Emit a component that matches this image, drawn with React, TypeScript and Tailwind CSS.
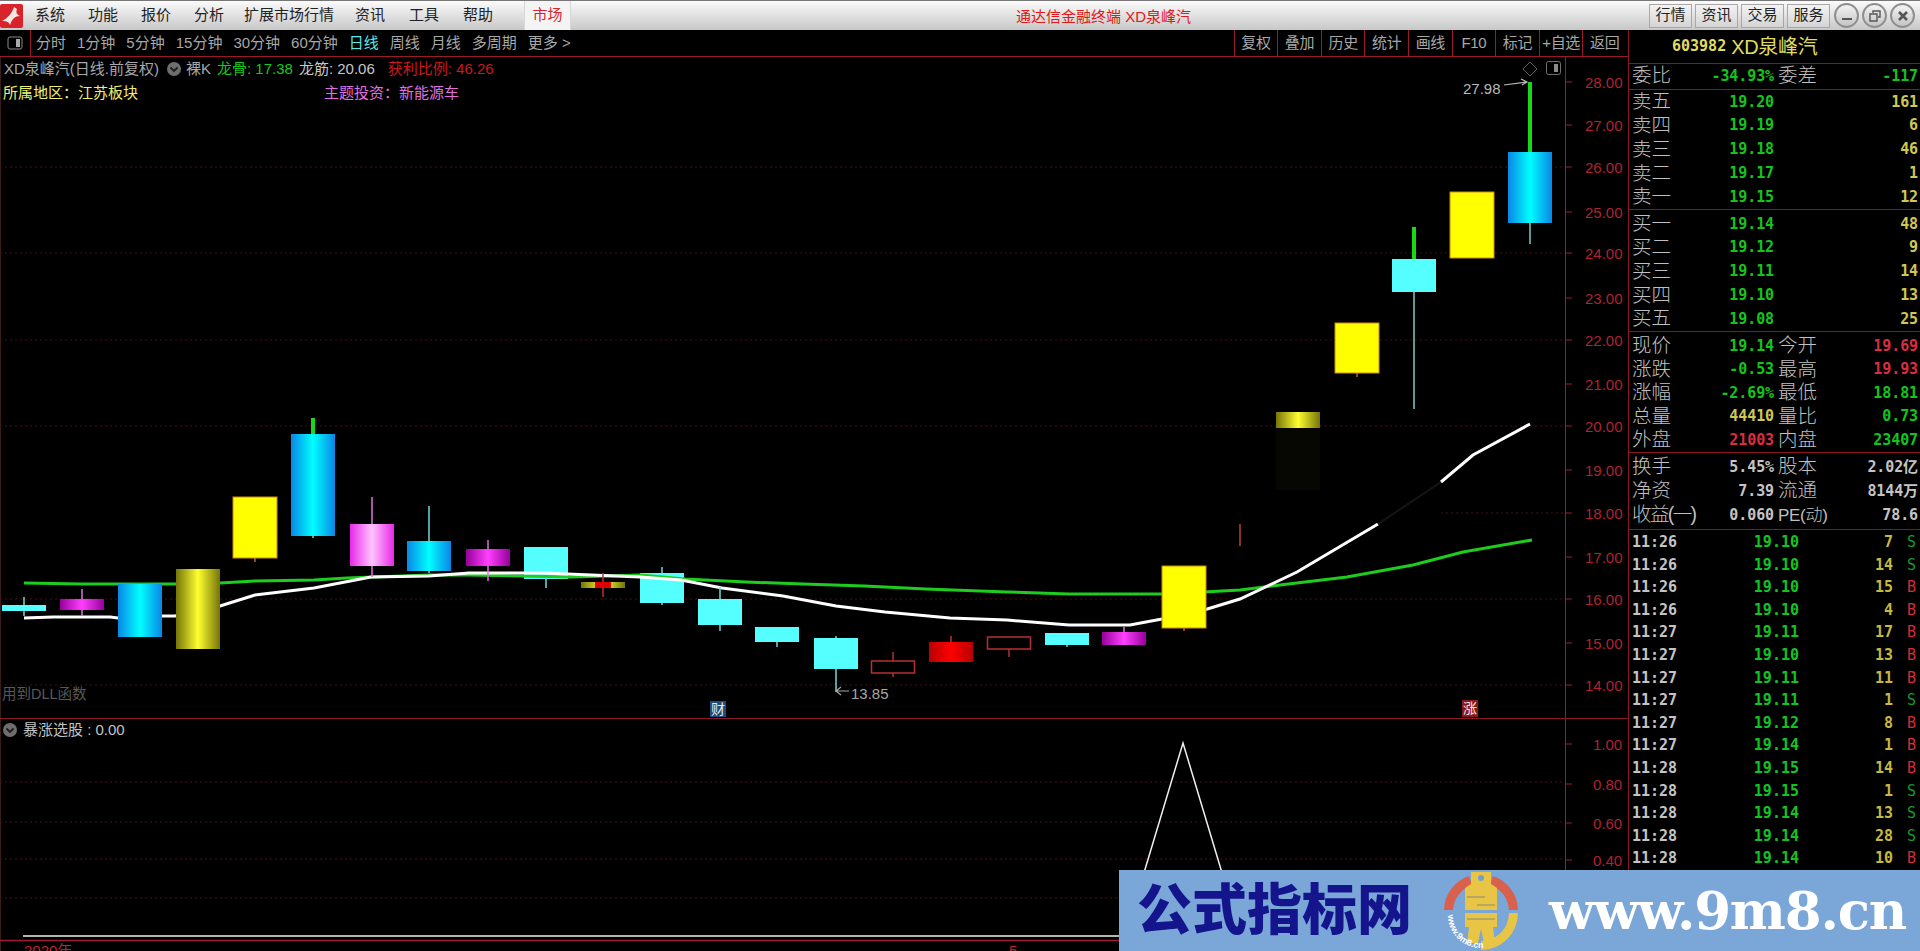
import React from "react";

type Candle = {
  x: number;
  top: number;
  bot: number;
  hi?: number;
  lo?: number;
  fill: string;
  wick: string;
  hiWick?: string;
  hollow?: boolean;
};

const CYAN = "#55ffff";
const YELLOW = "#ffff00";

const underLines: Candle[] = [
  { x: 524, top: 547, bot: 579, lo: 588, fill: CYAN, wick: "#70d8d8" },
  { x: 640, top: 573, bot: 603, hi: 567, lo: 605, fill: CYAN, wick: "#70d8d8" },
];

const candles: Candle[] = [
  { x: 2, top: 605, bot: 611, hi: 597, lo: 616, fill: CYAN, wick: "#70d8d8" },
  { x: 60, top: 599, bot: 610, hi: 589, lo: 616, fill: "url(#gMag)", wick: "#e070e0" },
  { x: 118, top: 584, bot: 637, fill: "url(#gBlue)", wick: "#70d8d8" },
  { x: 176, top: 569, bot: 649, fill: "url(#gOlive)", wick: "#c8c040" },
  { x: 233, top: 497, bot: 558, lo: 562, fill: YELLOW, wick: "#c06020" },
  { x: 291, top: 434, bot: 536, hi: 418, lo: 538, fill: "url(#gBlue)", wick: "#70d8d8", hiWick: "#18d818" },
  { x: 350, top: 524, bot: 566, hi: 497, lo: 577, fill: "url(#gPink)", wick: "#e070e0" },
  { x: 407, top: 541, bot: 571, hi: 506, lo: 573, fill: "url(#gBlue)", wick: "#70d8d8" },
  { x: 466, top: 549, bot: 566, hi: 540, lo: 581, fill: "url(#gMag)", wick: "#e070e0" },
  { x: 581, top: 582, bot: 588, hi: 573, lo: 597, fill: "url(#gOlive)", wick: "#c03030" },
  { x: 698, top: 599, bot: 625, hi: 587, lo: 631, fill: CYAN, wick: "#70d8d8" },
  { x: 755, top: 627, bot: 642, lo: 647, fill: CYAN, wick: "#70d8d8" },
  { x: 814, top: 638, bot: 669, hi: 636, lo: 692, fill: CYAN, wick: "#70d8d8" },
  { x: 871, top: 661, bot: 673, hi: 652, lo: 677, fill: "none", wick: "#b03030", hollow: true },
  { x: 929, top: 642, bot: 662, hi: 636, fill: "url(#gRed)", wick: "#c03030" },
  { x: 987, top: 637, bot: 649, lo: 657, fill: "none", wick: "#b03030", hollow: true },
  { x: 1045, top: 633, bot: 645, lo: 647, fill: CYAN, wick: "#70d8d8" },
  { x: 1102, top: 632, bot: 645, hi: 627, fill: "url(#gMag)", wick: "#e070e0" },
  { x: 1162, top: 566, bot: 628, lo: 631, fill: YELLOW, wick: "#c06020" },
  { x: 1276, top: 412, bot: 428, fill: "url(#gOlive)", wick: "#c8c040" },
  { x: 1335, top: 323, bot: 373, lo: 377, fill: YELLOW, wick: "#c06020" },
  { x: 1392, top: 259, bot: 292, hi: 227, lo: 409, fill: CYAN, wick: "#80c8c8", hiWick: "#18d818" },
  { x: 1450, top: 192, bot: 258, fill: YELLOW, wick: "#c06020" },
  { x: 1508, top: 152, bot: 223, hi: 82, lo: 244, fill: "url(#gBlue)", wick: "#80c8c8", hiWick: "#18d818" },
];

const greenLine =
  "24,583 82,584 175,584 220,583 255,581 314,580 347,578 429,575 469,575 571,577 640,575 685,579 746,582 803,584 864,586 926,589 1007,592 1069,594 1162,594 1204,592 1240,590 1280,585 1347,577 1413,565 1463,552 1532,540";
const whiteLineA =
  "24,618 53,617 110,617 118,618 163,616 175,616 220,606 255,595 314,588 371,577 429,576 469,573 543,573 640,577 681,580 722,588 783,596 836,606 885,612 950,618 1007,620 1069,625 1130,625 1162,619 1204,610 1240,599 1297,572 1378,524";
const whiteLineB = "1441,482 1473,455 1530,424";

const priceAxis = [
  ["28.00", 82],
  ["27.00", 125],
  ["26.00", 167],
  ["25.00", 212],
  ["24.00", 253],
  ["23.00", 298],
  ["22.00", 340],
  ["21.00", 384],
  ["20.00", 426],
  ["19.00", 470],
  ["18.00", 513],
  ["17.00", 557],
  ["16.00", 599],
  ["15.00", 643],
  ["14.00", 685],
] as const;

const gridDots = [
  [0, 167],
  [0, 253],
  [0, 340],
  [0, 426],
  [1441, 513],
  [0, 599],
  [0, 685],
] as const;

const CandleShape = ({ c }: { c: Candle }) => {
  const w = 44;
  const mid = c.x + w / 2;
  return (
    <g>
      {c.hi !== undefined && (
        <line
          x1={mid}
          x2={mid}
          y1={c.hi}
          y2={c.top}
          stroke={c.hiWick ?? c.wick}
          strokeWidth={c.hiWick ? 4 : 1.5}
        />
      )}
      {c.lo !== undefined && (
        <line x1={mid} x2={mid} y1={c.bot} y2={c.lo} stroke={c.wick} strokeWidth={1.5} />
      )}
      <rect
        x={c.hollow ? c.x + 0.5 : c.x}
        y={c.top}
        width={c.hollow ? w - 1 : w}
        height={c.bot - c.top}
        fill={c.fill}
        stroke={c.hollow ? "#b83030" : c.fill === YELLOW ? "#d08a10" : "none"}
        strokeWidth={c.hollow ? 1.5 : 1}
      />
    </g>
  );
};

const Grad = ({ id, edge, mid }: { id: string; edge: string; mid: string }) => (
  <linearGradient id={id} x1="0" x2="1" y1="0" y2="0">
    <stop offset="0" stopColor={edge} />
    <stop offset="0.5" stopColor={mid} />
    <stop offset="1" stopColor={edge} />
  </linearGradient>
);

const Fold = () => (
  <svg width="14" height="14" viewBox="0 0 14 14" className="shrink-0">
    <circle cx="7" cy="7" r="7" fill="#6e6e6e" />
    <path d="M3.5 5.5 7 9l3.5-3.5" fill="none" stroke="#1c1c1c" strokeWidth="1.8" />
  </svg>
);

const UpperChart = () => (
  <svg viewBox="0 57 1629 661" className="block h-[661px] w-[1629px]">
    <defs>
      <Grad id="gBlue" edge="#0a86e6" mid="#00ffff" />
      <Grad id="gMag" edge="#96009c" mid="#ff40ff" />
      <Grad id="gPink" edge="#e828e8" mid="#ffc4ff" />
      <Grad id="gOlive" edge="#74740a" mid="#ffff30" />
      <Grad id="gRed" edge="#b80000" mid="#ff0000" />
    </defs>
    <line x1="0.5" x2="0.5" y1="57" y2="718" stroke="#3a1c1c" />
    {gridDots.map(([x, y]) => (
      <line
        key={y}
        x1={x}
        x2="1565"
        y1={y}
        y2={y}
        stroke="#4a0f12"
        strokeWidth="1"
        strokeDasharray="2 3"
      />
    ))}
    {priceAxis.map(([label, y]) => (
      <g key={label}>
        <line x1="1565" x2="1572" y1={y} y2={y} stroke="#a01a24" />
        <text x="1585" y={y + 6} fontSize="15" fill="#b02232" fontFamily="Liberation Sans">
          {label}
        </text>
      </g>
    ))}
    <line x1="1565.5" x2="1565.5" y1="57" y2="718" stroke="#a01a24" />
    {underLines.map((c) => (
      <CandleShape key={c.x} c={c} />
    ))}
    <polyline points={greenLine} fill="none" stroke="#1ecc1e" strokeWidth="3" />
    <polyline points={whiteLineA} fill="none" stroke="#ffffff" strokeWidth="3" />
    <line x1="1378" y1="524" x2="1441" y2="482" stroke="#141414" strokeWidth="2" />
    <polyline points={whiteLineB} fill="none" stroke="#ffffff" strokeWidth="3" />
    {candles.map((c) => (
      <CandleShape key={c.x} c={c} />
    ))}
    <rect x="595" y="582" width="16" height="6" fill="#e00000" />
    <rect x="1276" y="428" width="44" height="62" fill="#060603" />
    <line x1="1240" x2="1240" y1="524" y2="546" stroke="#c04030" strokeWidth="1.5" />

    {/* high and low markers */}
    <text x="1463" y="94" fontSize="15" fill="#b8b8b8" fontFamily="Liberation Sans">
      27.98
    </text>
    <path d="M1504 85 1527 82M1521 79l6 3-5 3" fill="none" stroke="#b8b8b8" strokeWidth="1.2" />
    <text x="851" y="699" fontSize="15" fill="#a8a8a8" fontFamily="Liberation Sans">
      13.85
    </text>
    <path d="M849 691H836M841 687l-5 4 5 4" fill="none" stroke="#a8a8a8" strokeWidth="1.2" />
    <path d="M1530 62l7 7-7 7-7-7z" fill="none" stroke="#5e5e5e" />
    <rect x="1546.5" y="61.5" width="14" height="13" rx="2" fill="none" stroke="#707070" />
    <rect x="1554" y="64" width="4" height="8" fill="#8a8a8a" />
  </svg>
);

const LowerChart = () => (
  <svg viewBox="0 719 1629 232" className="block h-[232px] w-[1629px]">
    <line x1="0.5" x2="0.5" y1="719" y2="951" stroke="#3a1c1c" />
    {[782, 822, 859, 898].map((y) => (
      <line key={y} x1="0" x2="1565" y1={y} y2={y} stroke="#4a1014" strokeDasharray="2 3" />
    ))}
    {[
      ["1.00", 744],
      ["0.80", 784],
      ["0.60", 823],
      ["0.40", 860],
    ].map(([label, y]) => (
      <g key={label}>
        <line x1="1565" x2="1572" y1={y} y2={y} stroke="#a01a24" />
        <text x="1593" y={Number(y) + 6} fontSize="15" fill="#b02232" fontFamily="Liberation Sans">
          {label}
        </text>
      </g>
    ))}
    <line x1="1565.5" x2="1565.5" y1="719" y2="951" stroke="#a01a24" />
    <polyline
      points="23,936 1125,936 1183,743 1241,936 1565,936"
      fill="none"
      stroke="#f0f0f0"
      strokeWidth="1.5"
    />
    <line x1="0" x2="1629" y1="940.5" y2="940.5" stroke="#a01a30" strokeWidth="1.5" />
    <text x="24" y="956" fontSize="15" fill="#c02030" fontFamily="Liberation Sans, Noto Sans CJK SC">
      2020年
    </text>
    <text x="1009" y="956" fontSize="15" fill="#c02030" fontFamily="Liberation Sans">
      5
    </text>
  </svg>
);

const Row = ({
  l1,
  v1,
  c1,
  l2,
  v2,
  c2,
  l1Cls = "text-[19.5px]",
  l2Cls = "text-[19.5px]",
}: {
  l1: string;
  v1: string;
  c1: string;
  l2?: string;
  v2?: string;
  c2?: string;
  l1Cls?: string;
  l2Cls?: string;
}) => (
  <div className="flex h-[24px] items-center">
    <div className="flex w-[145px] items-center justify-between pl-[3px]">
      <span className={`${l1Cls} font-light text-[#c0c0c0] leading-none`}>{l1}</span>
      <span className={`font-[family-name:'DejaVu_Sans_Mono','Noto_Sans_CJK_SC',monospace] text-[15px] font-bold tracking-[-0.1px] ${c1}`}>
        {v1}
      </span>
    </div>
    {l2 && (
      <div className="flex flex-1 items-center justify-between pl-[4px] pr-[2px]">
        <span className={`${l2Cls} font-light text-[#c0c0c0] leading-none`}>{l2}</span>
        <span className={`font-[family-name:'DejaVu_Sans_Mono','Noto_Sans_CJK_SC',monospace] text-[15px] font-bold tracking-[-0.1px] ${c2}`}>
          {v2}
        </span>
      </div>
    )}
  </div>
);

const Rule = () => <div className="h-[1px] shrink-0 bg-[#8c1420]" />;

const GREEN = "text-[#14c41c]";
const GOLD = "text-[#d0c850]";
const RED = "text-[#dc2c40]";
const GREY = "text-[#c4c4c4]";

const sells = [
  ["卖五", "19.20", "161"],
  ["卖四", "19.19", "6"],
  ["卖三", "19.18", "46"],
  ["卖二", "19.17", "1"],
  ["卖一", "19.15", "12"],
];
const buys = [
  ["买一", "19.14", "48"],
  ["买二", "19.12", "9"],
  ["买三", "19.11", "14"],
  ["买四", "19.10", "13"],
  ["买五", "19.08", "25"],
];

const trades = [
  ["11:26", "19.10", "7", "S"],
  ["11:26", "19.10", "14", "S"],
  ["11:26", "19.10", "15", "B"],
  ["11:26", "19.10", "4", "B"],
  ["11:27", "19.11", "17", "B"],
  ["11:27", "19.10", "13", "B"],
  ["11:27", "19.11", "11", "B"],
  ["11:27", "19.11", "1", "S"],
  ["11:27", "19.12", "8", "B"],
  ["11:27", "19.14", "1", "B"],
  ["11:28", "19.15", "14", "B"],
  ["11:28", "19.15", "1", "S"],
  ["11:28", "19.14", "13", "S"],
  ["11:28", "19.14", "28", "S"],
  ["11:28", "19.14", "10", "B"],
];

const QuotePanel = () => (
  <div className="-ml-[1px] flex w-[292px] flex-col border-l border-[#8c1420]">
    <div className="flex h-[33px] items-center pl-[43px] text-[#e0dc60]">
      <span className="font-[family-name:'DejaVu_Sans_Mono',monospace] text-[15px] font-bold">603982</span>
      <span className="ml-[5px] text-[20px] tracking-[-0.3px]">XD泉峰汽</span>
    </div>
    <Rule />
    <div className="h-[25px]">
      <Row l1="委比" v1="-34.93%" c1={GREEN} l2="委差" v2="-117" c2={GREEN} />
    </div>
    <Rule />
    <div className="flex h-[119px] flex-col">
      {sells.map(([n, p, v]) => (
        <Row key={n} l1={n} v1={p} c1={GREEN} l2=" " v2={v} c2={GOLD} />
      ))}
    </div>
    <Rule />
    <div className="flex h-[121px] flex-col pt-[2px]">
      {buys.map(([n, p, v]) => (
        <Row key={n} l1={n} v1={p} c1={GREEN} l2=" " v2={v} c2={GOLD} />
      ))}
    </div>
    <Rule />
    <div className="flex h-[120px] flex-col pt-[2px]">
      <Row l1="现价" v1="19.14" c1={GREEN} l2="今开" v2="19.69" c2={RED} />
      <Row l1="涨跌" v1="-0.53" c1={GREEN} l2="最高" v2="19.93" c2={RED} />
      <Row l1="涨幅" v1="-2.69%" c1={GREEN} l2="最低" v2="18.81" c2={GREEN} />
      <Row l1="总量" v1="44410" c1={GOLD} l2="量比" v2="0.73" c2={GREEN} />
      <Row l1="外盘" v1="21003" c1={RED} l2="内盘" v2="23407" c2={GREEN} />
    </div>
    <Rule />
    <div className="flex h-[76px] flex-col pt-[2px]">
      <Row l1="换手" v1="5.45%" c1={GREY} l2="股本" v2="2.02亿" c2={GREY} />
      <Row l1="净资" v1="7.39" c1={GREY} l2="流通" v2="8144万" c2={GREY} />
      <Row
        l1="收益(一)"
        l1Cls="text-[19.5px] tracking-[-1.6px]"
        v1="0.060"
        c1={GREY}
        l2="PE(动)"
        l2Cls="text-[17px] tracking-[-0.3px]"
        v2="78.6"
        c2={GREY}
      />
    </div>
    <Rule />
    <div className="flex flex-col pt-[1px] font-[family-name:'DejaVu_Sans_Mono',monospace] text-[15px] font-bold">
      {trades.map(([t, p, v, s], i) => (
        <div key={i} className="grid h-[22.6px] grid-cols-[52px_115px_94px_30px] items-center pl-[3px]">
          <span className="text-[#c4c4c4]">{t}</span>
          <span className="-ml-[3px] text-right text-[#12c422]">{p}</span>
          <span className="-ml-[3px] text-right text-[#c8b840]">{v}</span>
          <span className={`pl-[14px] font-normal ${s === "S" ? "text-[#179a2a]" : "text-[#d62c38]"}`}>{s}</span>
        </div>
      ))}
    </div>
  </div>
);

const MENUS = ["系统", "功能", "报价", "分析"];
const MENUS2 = ["资讯", "工具", "帮助"];

const WinDot = ({ children }: { children: React.ReactNode }) => (
  <div className="flex h-[25px] w-[25px] items-center justify-center rounded-full border-2 border-[#8f8f8f] bg-gradient-to-b from-[#f4f4f4] to-[#c4c4c4]">
    {children}
  </div>
);

const TitleBar = () => (
  <div className="relative flex h-[30px] shrink-0 items-center border-t border-[#777] bg-gradient-to-b from-[#fbfbfb] to-[#c8c8c8] text-[15px] text-[#222]">
    <svg width="23" height="24" viewBox="0 0 23 24" className="shrink-0">
      <rect width="23" height="24" rx="2" fill="#d8232a" />
      <path d="M2 17C8 14 12 9 14 3l3 2c-1 3-1 5 3 7-5 0-8 3-10 9-1-3-3-4-8-4z" fill="#f4e8e0" />
    </svg>
    <div className="ml-[12px] flex gap-[23px]">
      {MENUS.map((m) => (
        <span key={m}>{m}</span>
      ))}
    </div>
    <span className="ml-[20px]">扩展市场行情</span>
    <div className="ml-[21px] flex gap-[24px]">
      {MENUS2.map((m) => (
        <span key={m}>{m}</span>
      ))}
    </div>
    <div className="ml-[31px] flex h-full w-[47px] items-center justify-center border-x border-[#d8d8d8] bg-[#f4f4f4] text-[#d8242c]">
      市场
    </div>
    {/* centred window title */}
    <span className="absolute left-[1016px] top-[5px] text-[15px] text-[#e01818]">通达信金融终端 XD泉峰汽</span>
    <div className="ml-auto mr-[5px] flex items-center gap-[3px]">
      {["行情", "资讯", "交易", "服务"].map((b) => (
        <div
          key={b}
          className="flex h-[24px] w-[43px] items-center justify-center border border-[#a8a8a8] bg-gradient-to-b from-[#f4f4f4] to-[#d4d4d4] text-[15px]"
        >
          {b}
        </div>
      ))}
      <div className="ml-[1px] flex gap-[3px]">
        <WinDot>
          <div className="mt-[6px] h-[2px] w-[10px] bg-[#555]" />
        </WinDot>
        <WinDot>
          <svg width="12" height="12" viewBox="0 0 12 12">
            <path d="M4 3V1h7v6H9M1 4h7v7H1z" fill="none" stroke="#555" strokeWidth="1.4" />
          </svg>
        </WinDot>
        <WinDot>
          <svg width="12" height="12" viewBox="0 0 12 12">
            <path d="M2 2l8 8M10 2l-8 8" stroke="#555" strokeWidth="2.6" />
          </svg>
        </WinDot>
      </div>
    </div>
  </div>
);

const Toolbar = () => (
  <div className="flex h-[27px] shrink-0 items-center border-b border-[#9a1a28] text-[15px] text-[#a8a8a8]">
    <div className="flex h-full w-[31px] items-center justify-center border-r border-[#9a1a28]">
      <svg width="16" height="14" viewBox="0 0 16 14">
        <rect x="1" y="1" width="14" height="12" rx="2" fill="none" stroke="#888" />
        <rect x="9" y="3" width="4" height="8" fill="#aaa" />
      </svg>
    </div>
    <div className="ml-[5px] flex gap-[11px]">
      <span>分时</span>
      <span>1分钟</span>
      <span>5分钟</span>
      <span>15分钟</span>
      <span>30分钟</span>
      <span>60分钟</span>
      <span className="text-[#58e8e8]">日线</span>
      <span>周线</span>
      <span>月线</span>
      <span>多周期</span>
      <span>更多 &gt;</span>
    </div>
    <div className="ml-auto mr-[3px] flex h-full">
      {["复权", "叠加", "历史", "统计", "画线", "F10", "标记", "+自选", "返回"].map((t) => (
        <div
          key={t}
          className="flex h-full w-[43.6px] items-center justify-center whitespace-nowrap border-l border-[#9a1a28] tracking-[-0.3px]"
        >
          {t}
        </div>
      ))}
    </div>
  </div>
);

const Watermark = () => (
  <div className="absolute left-[1119px] top-[870px] flex h-[81px] w-[801px] items-center bg-[#7aa6d8]">
    <span className="ml-[18px] w-[275px] shrink-0 whitespace-nowrap text-[55px] font-black leading-none text-[#14148c]">
      公式指标网
    </span>
    <svg width="80" height="80" viewBox="0 0 80 80" className="ml-[29px] shrink-0">
      <path d="M3 39A37 37 0 0 1 28 5l3 9A28 28 0 0 0 12 39z" fill="#d9604c" />
      <path d="M77 39A37 37 0 0 0 52 5l-3 9A28 28 0 0 1 68 39z" fill="#d9604c" />
      <path d="M77 42A37 37 0 0 1 40 79v-9A28 28 0 0 0 68 42z" fill="#e8c544" />
      <path
        d="M30 1h20v12l6 4v22H24V17l6-4zM24 42h32v14h-4l2 16H43l-3-14-3 14H26l2-16h-4z"
        fill="#e8c544"
      />
      <circle cx="40" cy="7" r="3" fill="#6fa0cf" />
      <path d="M26 26h18M36 34h18M26 48h28" stroke="#a89c6c" strokeWidth="1.5" />
      <path id="wmArc" d="M7 44A33 33 0 0 0 42 77" fill="none" />
      <text fontSize="9" fontWeight="700" fill="#ffffff" fontFamily="Liberation Sans">
        <textPath href="#wmArc">www.9m8.cn</textPath>
      </text>
    </svg>
    <span className="ml-[28px] shrink-0 whitespace-nowrap font-[family-name:'DejaVu_Serif',serif] text-[53px] font-bold leading-none tracking-[-1.2px] text-white">
      www.9m8.cn
    </span>
  </div>
);

const App = () => (
  <div className="relative flex h-[951px] w-[1920px] flex-col overflow-hidden bg-black font-[family-name:'Liberation_Sans','Noto_Sans_CJK_SC',sans-serif]">
    <TitleBar />
    <div className="flex flex-1">
      <div className="flex w-[1629px] flex-col">
        <Toolbar />
        <div className="relative h-[662px] shrink-0 border-b border-[#8a1a24]">
          <UpperChart />
          <div className="absolute left-[4px] top-[2px] flex items-center text-[15px] leading-[20px]">
            <span className="text-[#a8a8a8]">XD泉峰汽(日线.前复权)</span>
            <span className="ml-[8px]">
              <Fold />
            </span>
            <span className="ml-[5px] text-[#a8a8a8]">裸K</span>
            <span className="ml-[6px] text-[#18c818]">龙骨: 17.38</span>
            <span className="ml-[6px] text-[#c8c8c8]">龙筋: 20.06</span>
            <span className="ml-[13px] text-[#c81820]">获利比例: 46.26</span>
          </div>
          <div className="absolute left-[3px] top-[26px] flex text-[15px] leading-[20px]">
            <span className="w-[321px] text-[#f0f070]">所属地区：江苏板块</span>
            <span className="text-[#e070e0]">主题投资：新能源车</span>
          </div>
          <span className="absolute left-[2px] top-[627px] text-[14.5px] text-[#585858]">用到DLL函数</span>
          <span className="absolute left-[710px] top-[644px] flex h-[16px] w-[16px] items-center justify-center bg-[#1d4a7c] text-[14px] text-[#e8e8e8]">
            财
          </span>
          <span className="absolute left-[1462px] top-[643px] flex h-[17px] w-[16px] items-center justify-center bg-[#8a1818] text-[14px] text-[#f0e8e8]">
            涨
          </span>
        </div>
        <div className="relative flex-1">
          <LowerChart />
          <div className="absolute left-[3px] top-[1px] flex items-center gap-[6px] text-[15px] leading-[20px] text-[#c4c4c4]">
            <Fold />
            <span>暴涨选股 : 0.00</span>
          </div>
        </div>
      </div>
      <QuotePanel />
    </div>
    <Watermark />
  </div>
);

export default App;
